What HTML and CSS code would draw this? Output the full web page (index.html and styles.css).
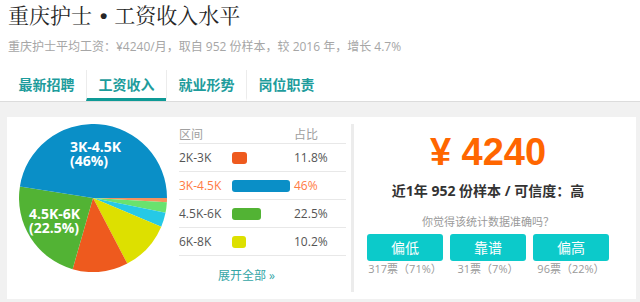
FILE: index.html
```html
<!DOCTYPE html>
<html lang="zh-CN">
<head>
<meta charset="utf-8">
<title>重庆护士 • 工资收入水平</title>
<link rel="stylesheet" href="styles.css">
</head>
<body>
<div class="head">
  <h1 class="title">重庆护士<span class="dot">•</span>工资收入水平</h1>
  <p class="sub">重庆护士平均工资：¥4240/月，取自 952 份样本，较 2016 年，增长 4.7%</p>
  <ul class="tabs">
    <li>最新招聘</li>
    <li class="active">工资收入</li>
    <li>就业形势</li>
    <li>岗位职责</li>
  </ul>
</div>
<div class="card">
  <div class="left">
    <svg class="pie" width="148" height="148" viewBox="0 0 148 148">
      <path fill="#f4925e" d="M74 74 L148 74 A74 74 0 0 1 147.88 78.26 Z"/>
      <path fill="#69e26e" d="M74 74 L147.88 78.26 A74 74 0 0 1 146.51 88.75 Z"/>
      <path fill="#26c9e6" d="M74 74 L146.51 88.75 A74 74 0 0 1 142.22 102.68 Z"/>
      <path fill="#dde000" d="M74 74 L142.22 102.68 A74 74 0 0 1 108.28 139.58 Z"/>
      <path fill="#ee5a1e" d="M74 74 L108.28 139.58 A74 74 0 0 1 53.60 145.13 Z"/>
      <path fill="#52b334" d="M74 74 L53.60 145.13 A74 74 0 0 1 0.91 62.42 Z"/>
      <path fill="#0a8fc7" d="M74 74 L0.91 62.42 A74 74 0 0 1 148 74 Z"/>
      <text class="plabel"><tspan x="51" y="27.5">3K-4.5K</tspan><tspan x="51" y="42">(46%)</tspan></text>
      <text class="plabel"><tspan x="10" y="94.7">4.5K-6K</tspan><tspan x="10" y="108.5">(22.5%)</tspan></text>
    </svg>
    <div class="table">
      <div class="thead"><span class="c1">区间</span><span class="c2"></span><span class="c3">占比</span></div>
      <div class="row"><span class="c1">2K-3K</span><span class="c2"><i class="bar red" style="width:15px"></i></span><span class="c3">11.8%</span></div>
      <div class="row hl"><span class="c1">3K-4.5K</span><span class="c2"><i class="bar blue" style="width:58px"></i></span><span class="c3">46%</span></div>
      <div class="row"><span class="c1">4.5K-6K</span><span class="c2"><i class="bar green" style="width:29px"></i></span><span class="c3">22.5%</span></div>
      <div class="row"><span class="c1">6K-8K</span><span class="c2"><i class="bar yellow" style="width:14px"></i></span><span class="c3">10.2%</span></div>
      <a class="more">展开全部 »</a>
    </div>
  </div>
  <div class="divider"></div>
  <div class="right">
    <div class="price">¥ 4240</div>
    <div class="info">近1年 952 份样本 / 可信度：高</div>
    <div class="ask">你觉得该统计数据准确吗？</div>
    <div class="votes">
      <div class="vote"><div class="btn">偏低</div><div class="count">317票（71%）</div></div>
      <div class="vote"><div class="btn">靠谱</div><div class="count">31票（7%）</div></div>
      <div class="vote"><div class="btn">偏高</div><div class="count">96票（22%）</div></div>
    </div>
  </div>
</div>
</body>
</html>
```
FILE: styles.css
```css
html, body {
  margin: 0;
  padding: 0;
}
body {
  background: #f1f1f1;
  font-family: "Open Sans", "Noto Sans CJK SC", sans-serif;
  color: #333;
}
.head {
  background: #fff;
  padding-left: 8px;
  border-bottom: 1px solid #dcdcdc;
}
.title {
  margin: 0;
  font-family: "Noto Serif CJK SC", "Noto Sans CJK SC", serif;
  font-size: 21px;
  line-height: 28px;
  font-weight: 400;
  color: #262626;
}
.dot {
  font-family: "Liberation Sans", Arial, sans-serif;
  font-weight: 700;
  margin: 0 7px 0 8px;
}
.sub {
  margin: 8px 0 0;
  font-size: 12px;
  line-height: 18px;
  color: #a6a6a6;
}
.tabs {
  list-style: none;
  margin: 14px 0 0 -1px;
  padding: 0;
  display: flex;
}
.tabs li {
  padding: 0 11.5px;
  font-family: "Noto Sans CJK SC", sans-serif;
  font-size: 14px;
  font-weight: 700;
  line-height: 28px;
  color: #1e9c9c;
  border-bottom: 3px solid transparent;
}
.tabs li + li {
  border-left: 1px solid #ececec;
}
.tabs li.active {
  border-bottom-color: #0e9a96;
}
.card {
  margin: 15px 4px 0 7px;
  background: #fff;
  display: flex;
  padding: 7px 0;
  height: 168px;
}
.left {
  display: flex;
  padding-left: 12px;
}
.pie {
  flex: none;
  display: block;
}
.plabel {
  fill: #fff;
  font-family: "Open Sans", sans-serif;
  font-weight: 700;
  font-size: 14px;
}
.table {
  margin-left: 12px;
  width: 167px;
  display: flex;
  flex-direction: column;
}
.thead, .row {
  display: flex;
  align-items: center;
  border-bottom: 1px solid #e8e8e8;
  font-size: 12px;
}
.thead {
  height: 19px;
  color: #a0a0a0;
}
.row {
  height: 27px;
  color: #555;
}
.row.hl {
  color: #ff7b44;
}
.c1 {
  width: 53px;
}
.c2 {
  width: 62px;
  display: flex;
  align-items: center;
}
.bar {
  display: block;
  height: 12px;
  border-radius: 3px;
}
.red { background: #ee5a1e; }
.blue { background: #0a8fc7; }
.green { background: #52b334; }
.yellow { background: #dde000; }
.more {
  margin-top: 12px;
  padding-left: 39px;
  font-size: 12px;
  line-height: 16px;
  color: #34a6a6;
}
.divider {
  width: 3px;
  background: #ececec;
  margin-left: 5px;
}
.right {
  flex: 1;
  padding: 9px 14px 0 0;
  display: flex;
  flex-direction: column;
  align-items: center;
}
.price {
  font-family: "Liberation Sans", Arial, sans-serif;
  font-weight: 700;
  font-size: 38px;
  line-height: 38px;
  color: #ff6600;
}
.info {
  margin-top: 10px;
  font-size: 14px;
  font-weight: 700;
  line-height: 20px;
  color: #333;
}
.ask {
  margin-top: 13px;
  font-size: 11px;
  line-height: 16px;
  color: #9a9a9a;
}
.votes {
  margin-top: 4px;
  display: flex;
  gap: 7px;
}
.vote {
  display: flex;
  flex-direction: column;
  align-items: center;
}
.btn {
  width: 76px;
  height: 27px;
  line-height: 27px;
  text-align: center;
  background: #0ccaca;
  border-radius: 3px;
  color: #fff;
  font-size: 14px;
  font-family: "Noto Sans CJK SC", sans-serif;
}
.count {
  margin-top: 1px;
  font-size: 11px;
  line-height: 14px;
  color: #9a9a9a;
}
```
